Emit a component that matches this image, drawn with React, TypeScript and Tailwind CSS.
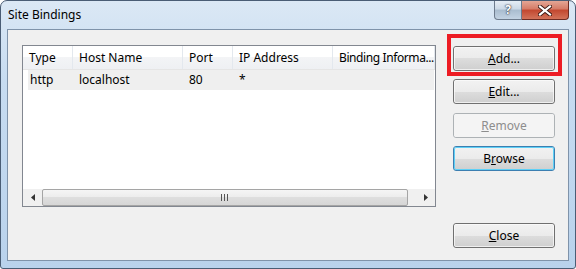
import React from "react";

const font = { fontFamily: '"Segoe UI", "Noto Sans", "Open Sans", sans-serif' };

type BtnProps = {
  label: React.ReactNode;
  variant?: "normal" | "disabled" | "focused";
};

const WinButton: React.FC<BtnProps> = ({ label, variant = "normal" }) => {
  const border =
    variant === "disabled"
      ? "border-[#adb2b5]"
      : variant === "focused"
      ? "border-[#3c7fb1]"
      : "border-[#707070]";
  const face =
    variant === "disabled"
      ? "bg-[#f4f4f4]"
      : "bg-[linear-gradient(to_bottom,#f2f2f2_0%,#ebebeb_50%,#dddddd_50%,#cfcfcf_100%)]";
  const inner =
    variant === "focused"
      ? "border-[#5fd0f6]"
      : variant === "disabled"
      ? "border-[#f4f4f4]"
      : "border-[#fcfcfc]/70";
  return (
    <div
      className={`h-[25px] w-[102px] rounded-[3px] border ${border} ${face} flex items-center justify-center`}
    >
      <div
        className={`flex h-full w-full items-center justify-center rounded-[2px] border ${inner} text-[12px] ${
          variant === "disabled" ? "text-[#8d8d8d]" : "text-black"
        }`}
      >
        {label}
      </div>
    </div>
  );
};

const columns = [
  { name: "Type", w: "w-[50px] shrink-0" },
  { name: "Host Name", w: "w-[110px] shrink-0" },
  { name: "Port", w: "w-[50px] shrink-0" },
  { name: "IP Address", w: "w-[100px] shrink-0" },
  { name: "Binding Informa...", w: "flex-1 min-w-0 tracking-[-0.4px]" },
];

const row = ["http", "localhost", "80", "*", ""];

export default function App() {
  return (
    <div
      style={font}
      className="flex h-[269px] w-[576px] flex-col overflow-hidden rounded-t-[7px] rounded-b-[3px] border border-[#4a5d75] bg-[linear-gradient(to_bottom,#dbe8f5_0%,#c7dcf1_30%,#b9d2ec_100%)]"
    >
      {/* title bar */}
      <div className="flex h-[28px] shrink-0 items-start justify-between">
        <span className="pl-[7px] pt-[6px] text-[12px] leading-[16px] text-black">Site Bindings</span>
        <div className="mr-[6px] flex">
          <div className="flex h-[19px] w-[28px] items-center justify-center rounded-bl-[4px] border border-t-0 border-[#6d7b8d] bg-[linear-gradient(to_bottom,#e6edf5_0%,#cbd8e6_45%,#a9bccf_50%,#c3d3e3_100%)] text-[12px] font-bold text-white [text-shadow:0_0_1px_#223,0_0_2px_#223]">
            ?
          </div>
          <div className="flex h-[19px] w-[47px] items-center justify-center rounded-br-[4px] border border-l-0 border-t-0 border-[#6e2b22] bg-[linear-gradient(to_bottom,#e4a695_0%,#d57a66_45%,#c2472f_50%,#d3735a_100%)]">
            <svg width="14" height="11" viewBox="0 0 14 11">
              <path d="M2 1.5 L12 9.5 M12 1.5 L2 9.5" stroke="#3b1a15" strokeWidth="4" strokeLinecap="square" />
              <path d="M2 1.5 L12 9.5 M12 1.5 L2 9.5" stroke="#ffffff" strokeWidth="2.2" strokeLinecap="square" />
            </svg>
          </div>
        </div>
      </div>

      {/* client area */}
      <div className="mx-[6px] mb-[7px] flex flex-1 border border-[#7f93aa] bg-[#f0f0f0] pl-[14px] pt-[15px] text-[12px]">
        {/* list view */}
        <div className="flex h-[162px] w-[414px] flex-col border border-[#828790] bg-white">
          <div className="flex h-[24px] shrink-0 border-b border-[#e5e5e5] bg-[linear-gradient(to_bottom,#ffffff_0%,#ffffff_50%,#f3f4f6_50%,#eef0f3_100%)]">
            {columns.map((c) => (
              <div
                key={c.name}
                className={`${c.w} flex items-center overflow-hidden whitespace-nowrap border-r border-[#e3e8ee] pl-[6px] text-black`}
              >
                {c.name}
              </div>
            ))}
          </div>
          <div className="mr-[1px] flex h-[20px]">
            <div className="w-[5px] shrink-0" />
            <div className="flex flex-1 bg-[#efefef]">
              {row.map((v, i) => (
                <div
                  key={i}
                  className={`${i === 0 ? "w-[45px] shrink-0 pl-[2px]" : `${columns[i].w} pl-[6px]`} flex items-center text-black`}
                >
                  {v}
                </div>
              ))}
            </div>
          </div>
          <div className="flex-1" />
          {/* horizontal scrollbar */}
          <div className="flex h-[17px] shrink-0 bg-[#f0f0f0]">
            <div className="flex w-[19px] items-center justify-center">
              <svg width="4" height="7" viewBox="0 0 4 7">
                <path d="M4 0 L0 3.5 L4 7 Z" fill="#333" />
              </svg>
            </div>
            <div className="flex w-[366px] items-center justify-center rounded-[2px] border border-[#a5a5a5] bg-[linear-gradient(to_bottom,#f5f5f5_0%,#ececec_50%,#dedede_50%,#d6d6d6_100%)]">
              <svg width="8" height="7" viewBox="0 0 8 7">
                <path d="M0.5 0 V7 M3.5 0 V7 M6.5 0 V7" stroke="#555" strokeWidth="1" />
              </svg>
            </div>
            <div className="w-[8px]" />
            <div className="flex flex-1 items-center justify-center">
              <svg width="4" height="7" viewBox="0 0 4 7">
                <path d="M0 0 L4 3.5 L0 7 Z" fill="#333" />
              </svg>
            </div>
          </div>
        </div>

        {/* buttons */}
        <div className="ml-[17px] flex flex-col pt-[1px]">
          <div className="relative">
            <WinButton label={<span><u>A</u>dd...</span>} />
            <div className="pointer-events-none absolute -left-[6px] -right-[7px] -top-[12px] -bottom-[5px] border-4 border-[#ed1c24]" />
          </div>
          <div className="mt-[8px]">
            <WinButton label={<span><u>E</u>dit...</span>} />
          </div>
          <div className="mt-[9px]">
            <WinButton variant="disabled" label={<span><u>R</u>emove</span>} />
          </div>
          <div className="mt-[8px]">
            <WinButton variant="focused" label={<span>B<u>r</u>owse</span>} />
          </div>
          <div className="mt-[52px]">
            <WinButton label={<span><u>C</u>lose</span>} />
          </div>
        </div>
      </div>
    </div>
  );
}
